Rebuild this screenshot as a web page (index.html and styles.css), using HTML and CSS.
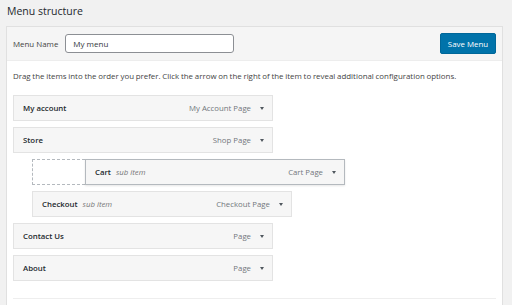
FILE: index.html
```html
<!DOCTYPE html>
<html lang="en">
<head>
  <meta charset="UTF-8" />
  <title>Menu structure</title>
  <link rel="stylesheet" href="styles.css">
</head>
<body>
  <h2 class="title">Menu structure</h2>

  <div class="panel">
    <div class="panel-head">
      <label class="name-label" for="menuName">Menu Name</label>
      <input type="text" id="menuName" class="name-input" value="My menu" />
      <button class="save-btn">Save Menu</button>
    </div>

    <div class="panel-body">
      <p class="hint">Drag the items into the order you prefer. Click the arrow on the right of the item to reveal additional configuration options.</p>

      <ul class="menu-list">
        <li class="item">
          <span class="item-title">My account</span>
          <span class="item-type">My Account Page</span>
          <span class="arrow"></span>
        </li>
        <li class="item">
          <span class="item-title">Store</span>
          <span class="item-type">Shop Page</span>
          <span class="arrow"></span>
        </li>
        <li class="drag-row">
          <div class="placeholder"></div>
          <div class="item dragging">
            <span class="item-title">Cart</span>
            <span class="sub">sub item</span>
            <span class="item-type">Cart Page</span>
            <span class="arrow"></span>
          </div>
        </li>
        <li class="item depth-1">
          <span class="item-title">Checkout</span>
          <span class="sub">sub item</span>
          <span class="item-type">Checkout Page</span>
          <span class="arrow"></span>
        </li>
        <li class="item">
          <span class="item-title">Contact Us</span>
          <span class="item-type">Page</span>
          <span class="arrow"></span>
        </li>
        <li class="item">
          <span class="item-title">About</span>
          <span class="item-type">Page</span>
          <span class="arrow"></span>
        </li>
      </ul>

      <div class="panel-foot"></div>
    </div>
  </div>
</body>
</html>
```

FILE: styles.css
```css
body {
  font-family: "Open Sans", Arial, sans-serif;
  margin: 0;
  padding: 0;
  background: #f1f1f1;
  color: #23282d;
}
.title {
  font-size: 10.5px;
  font-weight: 400;
  line-height: 16px;
  margin: 3px 0 7px 7px;
}
.panel {
  margin-left: 6px;
  width: 495px;
  border: 1px solid #e0e0e0;
  background: #fff;
}
.panel-head {
  display: flex;
  align-items: center;
  height: 33px;
  padding: 0 6px;
  background: #f5f5f5;
  border-bottom: 1px solid #ededed;
}
.name-label {
  font-size: 7.9px;
  color: #444;
  margin-right: 7px;
}
.name-input {
  box-sizing: border-box;
  width: 169px;
  height: 19px;
  padding: 0 7px;
  border: 1px solid #8c8f94;
  border-radius: 3px;
  font-family: inherit;
  font-size: 8px;
  color: #32373c;
}
.save-btn {
  box-sizing: border-box;
  margin-left: auto;
  width: 56px;
  height: 21px;
  padding: 0;
  background: #0073aa;
  border: 1px solid #006799;
  border-radius: 2px;
  color: #fff;
  font-family: inherit;
  font-size: 7.9px;
}
.panel-body {
  padding: 0 6px;
}
.hint {
  font-size: 7.9px;
  word-spacing: -0.3px;
  color: #444;
  margin: 0;
  padding: 9px 0 13px;
  line-height: 12px;
}
.menu-list {
  list-style: none;
  margin: 0;
  padding: 0;
  display: flex;
  flex-direction: column;
  gap: 6px;
}
.item {
  display: flex;
  align-items: center;
  width: 258px;
  height: 24px;
  background: #f6f6f6;
  border: 1px solid #e3e3e3;
  font-size: 7.8px;
}
.item-title {
  font-weight: 600;
  margin-left: 9px;
  color: #23282d;
}
.sub {
  font-style: italic;
  color: #777;
  margin-left: 5px;
}
.item-type {
  margin-left: auto;
  color: #72777c;
}
.arrow {
  width: 0;
  height: 0;
  margin: 0 8px 0 9px;
  border-left: 2.5px solid transparent;
  border-right: 2.5px solid transparent;
  border-top: 3.5px solid #50575e;
}
.drag-row {
  display: flex;
  padding-left: 19px;
}
.placeholder {
  width: 52px;
  height: 24px;
  border: 1px dashed #b4b9be;
  border-right: none;
}
.dragging {
  border-color: #b4b9be;
  box-shadow: 0 1px 2px rgba(0, 0, 0, 0.1);
}
.depth-1 {
  margin-left: 19px;
}
.panel-foot {
  margin-top: 17px;
  height: 20px;
  border-top: 1px solid #eee;
}
```
